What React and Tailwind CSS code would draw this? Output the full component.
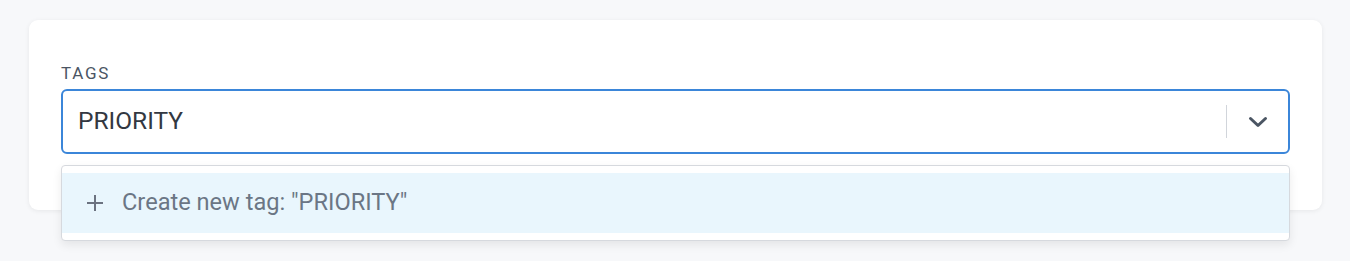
import React from 'react';

export default function App() {
  return (
    <div className="min-h-[261px] w-[1350px] bg-[#f7f8fa] pt-[20px] pl-[29px]" style={{ fontFamily: 'Roboto, "Liberation Sans", sans-serif' }}>
      <div className="relative w-[1293px] rounded-[9px] bg-white px-[32px] pt-[43px] pb-[56px] shadow-[0_1px_5px_rgba(0,0,0,0.07)]">
        <div className="text-[17px] leading-[20px] tracking-[0.1em] text-[#4b5563] uppercase">Tags</div>
        <div className="mt-[6px] flex h-[65px] items-center rounded-[6px] border-2 border-[#3b86d9] bg-white pl-[15px]">
          <span className="flex-1 text-[24.5px] text-[#333841]">PRIORITY</span>
          <div className="h-[33px] w-px bg-[#d1d5db]" />
          <div className="flex w-[61px] items-center justify-center">
            <svg width="20" height="12" viewBox="0 0 20 12" fill="none">
              <path d="M2.5 2.5 L10 9.5 L17.5 2.5" stroke="#4b5563" strokeWidth="3" strokeLinecap="round" strokeLinejoin="round" />
            </svg>
          </div>
        </div>
        <div className="absolute top-[145px] left-[32px] z-10 w-[1229px] rounded-[4px] border border-[#d6d9de] bg-white py-[7px] shadow-[0_4px_10px_rgba(0,0,0,0.08)]">
          <div className="flex h-[60px] items-center bg-[#e9f6fd] pl-[24px]">
            <svg width="18" height="18" viewBox="0 0 18 18" fill="none">
              <path d="M9 1 V17 M1 9 H17" stroke="#6b7280" strokeWidth="2" />
            </svg>
            <span className="ml-[18px] text-[23.6px] text-[#6b7685]">Create new tag: "PRIORITY"</span>
          </div>
        </div>
      </div>
    </div>
  );
}
